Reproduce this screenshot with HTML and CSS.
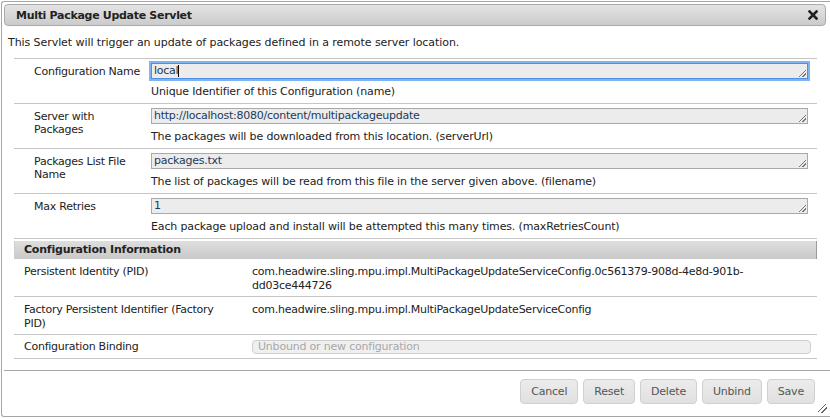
FILE: index.html
```html
<!DOCTYPE html>
<html>
<head>
<meta charset="utf-8">
<link rel="stylesheet" href="styles.css">
</head>
<body>
<div class="dialog">
  <div class="titlebar">
    <span class="title">Multi Package Update Servlet</span>
    <span class="close"><svg width="10" height="10" viewBox="0 0 10 10"><path d="M1.5 1.5 L8.5 8.5 M8.5 1.5 L1.5 8.5" stroke="#222" stroke-width="2.6" stroke-linecap="square"/></svg></span>
  </div>
  <div class="content">
    <p class="intro">This Servlet will trigger an update of packages defined in a remote server location.</p>
    <table class="props">
      <tr>
        <td class="lbl">Configuration Name</td>
        <td class="val"><div class="field focus"><span class="txt">local</span><span class="caret"></span><span class="grip"></span></div><div class="desc">Unique Identifier of this Configuration (name)</div></td>
      </tr>
      <tr>
        <td class="lbl">Server with Packages</td>
        <td class="val"><div class="field"><span class="txt">http://localhost:8080/content/multipackageupdate</span><span class="grip"></span></div><div class="desc">The packages will be downloaded from this location. (serverUrl)</div></td>
      </tr>
      <tr>
        <td class="lbl">Packages List File Name</td>
        <td class="val"><div class="field"><span class="txt">packages.txt</span><span class="grip"></span></div><div class="desc">The list of packages will be read from this file in the server given above. (filename)</div></td>
      </tr>
      <tr>
        <td class="lbl">Max Retries</td>
        <td class="val"><div class="field"><span class="txt">1</span><span class="grip"></span></div><div class="desc">Each package upload and install will be attempted this many times. (maxRetriesCount)</div></td>
      </tr>
    </table>
    <div class="infohead">Configuration Information</div>
    <table class="info">
      <tr>
        <td class="ilbl">Persistent Identity (PID)</td>
        <td class="ival">com.headwire.sling.mpu.impl.MultiPackageUpdateServiceConfig.0c561379-908d-4e8d-901b-dd03ce444726</td>
      </tr>
      <tr>
        <td class="ilbl">Factory Persistent Identifier (Factory PID)</td>
        <td class="ival">com.headwire.sling.mpu.impl.MultiPackageUpdateServiceConfig</td>
      </tr>
      <tr class="last">
        <td class="ilbl">Configuration Binding</td>
        <td class="ival"><div class="binding">Unbound or new configuration</div></td>
      </tr>
    </table>
  </div>
  <div class="buttonpane">
    <button class="btn">Cancel</button>
    <button class="btn">Reset</button>
    <button class="btn">Delete</button>
    <button class="btn">Unbind</button>
    <button class="btn">Save</button>
    <span class="resize"></span>
  </div>
</div>
</body>
</html>
```
FILE: styles.css
```css
html, body {
  margin: 0;
  padding: 0;
  background: #fff;
}
body {
  font-family: "DejaVu Sans", Verdana, sans-serif;
  font-size: 11px;
  color: #222;
  width: 830px;
  height: 419px;
  overflow: hidden;
}
.dialog {
  margin: 1px 0 0 1px;
  width: 829px;
  height: 416px;
  border: 1px solid #a6a6a6;
  border-right: none;
  border-radius: 3px 0 0 3px;
  box-sizing: border-box;
  padding: 2px 0 0 2px;
  position: relative;
}
.titlebar {
  width: 822px;
  height: 22px;
  box-sizing: border-box;
  border: 1px solid #aaa;
  border-radius: 4px;
  background: linear-gradient(#e4e4e4, #cbcbcb);
  display: flex;
  align-items: center;
  justify-content: space-between;
  padding: 0 7px 0 11px;
}
.title {
  font-weight: bold;
  font-size: 11px;
  color: #222;
  letter-spacing: -0.3px;
}
.close {
  display: flex;
  width: 10px;
  height: 10px;
}
.content {
  padding: 0 4px;
}
.intro {
  margin: 0;
  height: 32px;
  line-height: 14px;
  padding-top: 10px;
  box-sizing: border-box;
  letter-spacing: -0.07px;
}
.props, .info {
  border-collapse: collapse;
  margin-left: 6px;
  width: 803px;
  table-layout: fixed;
}
.props td, .info td {
  border-top: 1px solid #c6c6c6;
  border-bottom: 1px solid #c6c6c6;
  vertical-align: top;
  line-height: 13px;
  letter-spacing: -0.25px;
}
.lbl {
  width: 110px;
  padding: 6px 7px 0 20px;
  color: #222;
}
.val {
  padding: 4px 9px 4px 0;
}
.field {
  height: 16px;
  box-sizing: border-box;
  border: 1px solid #a9a9a9;
  background: #ececec;
  position: relative;
  padding: 0 2px;
  display: flex;
  align-items: center;
  color: #1b3a5a;
}
.field.focus {
  border-color: #4d90e6;
  box-shadow: 0 0 0 2px #7fb4f3;
}
.txt {
  line-height: 14px;
}
.caret {
  width: 1px;
  height: 12px;
  background: #000;
}
.grip {
  position: absolute;
  right: 1px;
  bottom: 1px;
  width: 7px;
  height: 7px;
  background: linear-gradient(135deg, transparent 45%, #777 45%, #777 55%, transparent 55%, transparent 70%, #777 70%, #777 80%, transparent 80%);
}
.desc {
  margin-top: 6px;
  line-height: 14px;
  height: 14px;
  white-space: nowrap;
  letter-spacing: -0.15px;
}
.infohead {
  margin: 2px 0 0 6px;
  width: 803px;
  height: 18px;
  box-sizing: border-box;
  background: linear-gradient(#dedede, #c9c9c9);
  border-right: 1px solid #9a9a9a;
  border-left: 1px solid #cfcfcf;
  font-weight: bold;
  padding-left: 9px;
  line-height: 18px;
  letter-spacing: -0.2px;
}
.info td {
  border-top: none;
  line-height: 14px;
}
.ilbl {
  width: 208px;
  padding: 6px 20px 3px 10px;
}
.ival {
  padding: 6px 6px 3px 0;
  letter-spacing: -0.35px;
}
.binding {
  height: 14px;
  box-sizing: border-box;
  border: 1px solid #cfcfcf;
  border-radius: 4px;
  background: #efefef;
  color: #a8a8a8;
  line-height: 12px;
  padding-left: 5px;
  letter-spacing: -0.2px;
}
.info tr.last td {
  padding-top: 5px;
  padding-bottom: 4px;
}
.buttonpane {
  position: absolute;
  left: 2px;
  right: 0;
  top: 368px;
  height: 46px;
  border-top: 1px solid #a8a8a8;
  display: flex;
  justify-content: flex-end;
  align-items: flex-start;
  padding: 8px 15px 0 0;
  box-sizing: border-box;
  gap: 5px;
}
.btn {
  font-family: "DejaVu Sans", Verdana, sans-serif;
  font-size: 11px;
  letter-spacing: -0.2px;
  color: #555;
  height: 25px;
  padding: 0 10px;
  border: 1px solid #d0d0d0;
  border-radius: 4px;
  background: linear-gradient(#ececec, #e0e0e0);
  margin: 0;
}
.resize {
  position: absolute;
  right: 3px;
  bottom: 3px;
  width: 9px;
  height: 9px;
  background: linear-gradient(135deg, transparent 40%, #666 40%, #666 50%, transparent 50%, transparent 65%, #666 65%, #666 75%, transparent 75%);
}
```
